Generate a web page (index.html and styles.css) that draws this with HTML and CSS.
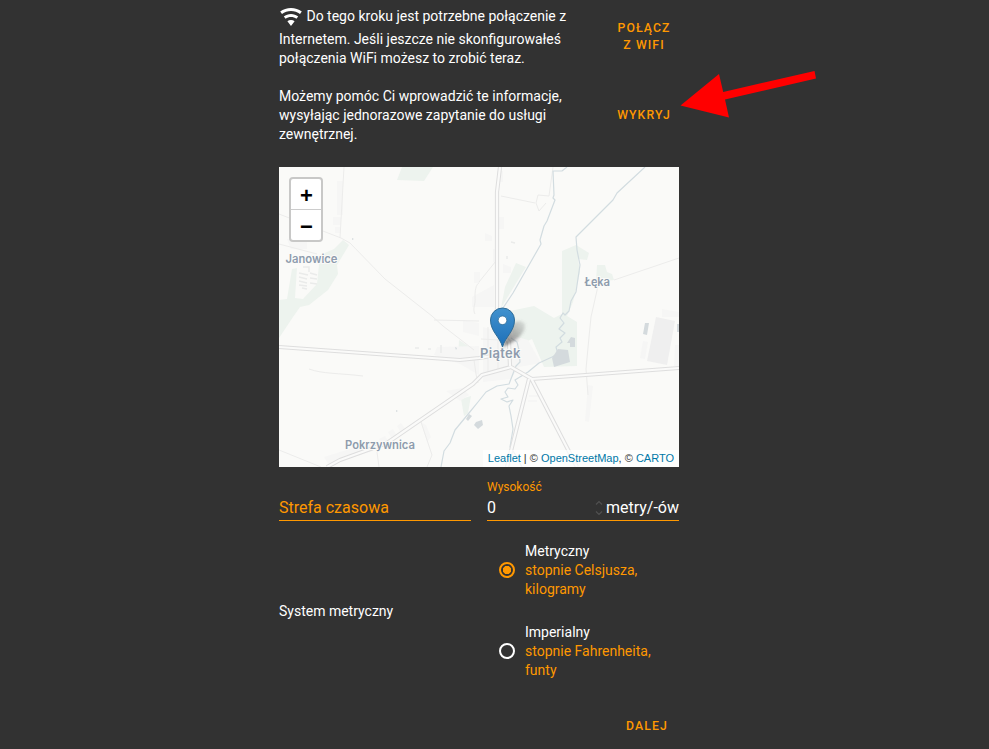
FILE: index.html
```html
<!DOCTYPE html>
<html lang="pl">
<head>
<meta charset="utf-8">
<title>Ustawienia regionalne</title>
<link rel="stylesheet" href="styles.css">
</head>
<body>
<main class="panel">
  <section class="row row-wifi">
    <p class="text"><svg class="wifi" viewBox="0 0 24 24"><path d="M12,21L15.6,16.2C14.6,15.45 13.35,15 12,15C10.65,15 9.4,15.45 8.4,16.2L12,21M12,3C7.95,3 4.21,4.34 1.2,6.6L3,9C5.5,7.12 8.62,6 12,6C15.38,6 18.5,7.12 21,9L22.8,6.6C19.79,4.34 16.05,3 12,3M12,9C9.3,9 6.81,9.89 4.8,11.4L6.6,13.8C8.1,12.67 9.97,12 12,12C14.03,12 15.9,12.67 17.4,13.8L19.2,11.4C17.19,9.89 14.7,9 12,9Z"/></svg> Do tego kroku jest potrzebne połączenie z<br>Internetem. Jeśli jeszcze nie skonfigurowałeś<br>połączenia WiFi możesz to zrobić teraz.</p>
    <button class="btn">Połącz<br>z WiFi</button>
  </section>
  <section class="row row-detect">
    <p class="text">Możemy pomóc Ci wprowadzić te informacje,<br>wysyłając jednorazowe zapytanie do usługi<br>zewnętrznej.</p>
    <button class="btn">Wykryj</button>
    <svg class="arrow" viewBox="0 0 140 50"><path d="M0.500 35.500L39 4L43.200 22L134.500 1L136 8.500L45 29.500L49 47.500Z"/></svg>
  </section>

  <section class="map">
    <svg class="tiles" viewBox="0 0 400 300">
      <defs>
        <linearGradient id="pin" x1="0" y1="0" x2="0" y2="1"><stop offset="0" stop-color="#4192ce"/><stop offset="1" stop-color="#1d6fb8"/></linearGradient>
        <linearGradient id="cast" gradientUnits="userSpaceOnUse" x1="224" y1="180" x2="246" y2="156"><stop offset="0" stop-color="#444" stop-opacity=".7"/><stop offset="1" stop-color="#555" stop-opacity=".15"/></linearGradient>
        <filter id="soft" x="-30%" y="-30%" width="160%" height="160%"><feGaussianBlur stdDeviation="1.800"/></filter>
      </defs>
      <g class="park">
        <path d="M123 0L118 13L145 14L154 0Z"/>
        <path d="M64 73L70 78L58 98L59 107L49 123L30 138L21 140L14 150L0 171V133L8 132L13 102L18 101L16 131L24 132L38 117L41 88L55 82Z"/>
        <path d="M237 96L247 100L222 141L226 120Z"/>
        <path d="M283 84L297 78L310 86L308 93L299 92L301 105L294 135L288 149L298 155L298 199L265 200L253 172L236 180L231 144L255 139L275 151L283 147Z"/>
        <path d="M318 98L326 98L328 105L333 107L335 113L317 115Z"/>
        <path d="M180 173L195 183V190L179 191ZM182 232L192 229L189 246L185 249Z"/>
      </g>
      <g class="built">
        <path d="M58 14H64V48H58ZM54 50H62V58H54ZM56 60H61V66H56ZM195 105H201V116H195ZM193 130L215 118V140H193ZM218 4H224V15H218ZM220 50H225V62H220ZM224 97L232 100V106H224ZM214 82H219V95H214ZM206 66L213 69V74H206ZM383 142L400 145V150H383Z"/>
        <path d="M8 72H28V82H12ZM45 290L90 276L94 284L50 298ZM167 224L183 221L190 228L181 234ZM158 180L200 179V208L181 197L155 188ZM184 153L200 156V169L184 165ZM204 160L249 173L262 196L240 200L232 212L204 215ZM309 218L314 219L310 255L306 254ZM250 228H260V230H250ZM249 233H258V235H249ZM100 272L106 269L109 274L103 277ZM109 265L114 262L118 269L113 272ZM118 259L122 256L127 263L122 266ZM142 255L147 258L152 270L148 275Z"/>
        <path d="M364 174L369 175L366 192L361 191ZM396 178H400V199H395Z"/>
      </g>
      <path class="hall" d="M377 150L396 154L388 198L368 194Z"/>
      <g class="houses"><path d="M24 100H30V105M20 106L29 108M20 110L28 112M20 114L28 116M20 118L28 119M31 106L38 108M31 111L38 112M31 116L38 117M23 121L28 122M136 181H140M149 182H152M162 178V186M232 75L236 76M228 89V92"/></g>
      <g class="minor">
        <path d="M65 0L61 71M0 47L62 71L71 76L106 112L153 149L164 159L195 183M0 77L38 87M200 115L217 94M196 147C193 142 197 137 196 130C196 120 198 117 200 116M222 29L256 36M274 0L270 29L259 28L257 36L260 44L267 36M335 113L400 91M319 119L312 150L310 170L307 202L309 228M155 153L200 154M30 202C44 207 59 206 84 209M0 283L42 300M98 285L100 300M142 255L153 288L148 300M195 193L197 207L199 216M202 172L240 174M202 184L230 183M204 191L229 190M209 160V208M219 160V204"/>
      </g>
      <g class="water">
        <path d="M288 0L283 4L274 4L275 28L274 31L276 33L268 54L265 59L261 73L262 77L234 126L224 141M232 171L238 175L240 183L241 195L237 199L230 217L218 219L207 225L199 235L190 246L176 263L171 276L165 284L162 300"/>
        <path d="M366 0L338 26L334 33L297 70L298 83L301 98L297 125L292 134L290 144L286 148L284 146L281 151L285 156L280 162L286 166L281 171L283 175L277 180L279 187L273 190L260 196L249 205L236 213L239 218L236 222L229 221L226 225L229 230L222 232L228 235L234 233L230 239L232 249L234 262L231 280L236 287L243 300"/>
      </g>
      <g class="pond"><path d="M279 182L289 183L291 195L275 200L273 191Z"/><path d="M366 156L370 156L368 168L364 167ZM398 157H400V165H398ZM292 170L296 171V180H291V176H288M190 247L193 249L189 254L187 252ZM197 255L203 253L204 258L199 262L195 258ZM73 71L75 72L73 73M176 180L178 181L177 183M117 243L119 244L117 245"/></g>
      <g class="road">
        <path class="outer" d="M221 0L218 25V162L230 175L231 199M0 180L181 193L200 191L219 188M48 300L61 293L108 276L194 217L203 208L232 200L253 212L400 201M250 212L228 300M252 211L298 300"/>
        <path class="inner" d="M221 0L218 25V162L230 175L231 199M0 180L181 193L200 191L219 188M48 300L61 293L108 276L194 217L203 208L232 200L253 212L400 201M250 212L228 300M252 211L298 300"/>
      </g>
      <g class="places">
        <text x="6.500" y="96" textLength="52">Janowice</text>
        <text x="305.500" y="118.500" textLength="25.500">Łęka</text>
        <text x="66" y="281.500" textLength="70">Pokrzywnica</text>
        <text class="town" x="201" y="190.500" textLength="40.500">Piątek</text>
      </g>
      <path class="shadow" d="M224 180L230 160Q240 150 246 157Q247 166 234 175Z"/>
      <path class="pin" d="M223.500 180C221 170 211.500 164.500 211.500 153A12 12 0 0 1 235.500 153C235.500 164.500 226 170 223.500 180Z"/>
      <circle class="pin-hole" cx="223.500" cy="153.300" r="4.300"/>
    </svg>
    <div class="zoom"><a class="zoom-key">+</a><a class="zoom-key">−</a></div>
    <div class="credit"><a>Leaflet</a> | © <a>OpenStreetMap</a>, © <a>CARTO</a></div>
  </section>

  <section class="fields">
    <div class="field"><span class="caption"></span><div class="line placeholder">Strefa czasowa</div></div>
    <div class="field"><span class="caption">Wysokość</span><div class="line"><span class="value">0</span><svg class="spin" viewBox="0 0 8 16"><path d="M1 4.500L4 1.500L7 4.500M1 11.500L4 14.500L7 11.500"/></svg><span>metry/-ów</span></div></div>
  </section>

  <section class="units">
    <div class="units-label">System metryczny</div>
    <div class="options">
      <label class="option"><span class="radio on"></span><span>Metryczny<br><em>stopnie Celsjusza,<br>kilogramy</em></span></label>
      <label class="option"><span class="radio"></span><span>Imperialny<br><em>stopnie Fahrenheita,<br>funty</em></span></label>
    </div>
  </section>
  <footer class="actions"><button class="btn">Dalej</button></footer>
</main>
</body>
</html>
```
FILE: styles.css
```css
* { box-sizing: border-box; }
body { margin: 0; height: 749px; overflow: hidden; background: #323232; color: #fff; font: 14px/19px Roboto, sans-serif; }
.panel { width: 400px; margin-left: 279px; padding-top: 5px; }
.row { display: flex; justify-content: space-between; align-items: center; position: relative; }
.row-wifi { height: 63px; }
.row-wifi .text { align-self: flex-end; }
.row-detect { height: 57px; margin-top: 19px; }
.text { margin: 0; white-space: nowrap; }
.wifi { width: 24px; height: 24px; margin-bottom: 1px; vertical-align: middle; fill: #fff; }
.btn { width: 70px; padding: 0; border: 0; background: none; color: #ff9800; font: 500 12.25px/17px Roboto, sans-serif; letter-spacing: 1.09px; text-transform: uppercase; text-align: center; }
.arrow { position: absolute; left: 401px; top: -17px; width: 140px; height: 50px; fill: #f00; }

.map { position: relative; height: 300px; margin-top: 23px; overflow: hidden; background: #fafaf8; }
.tiles { display: block; width: 400px; height: 300px; fill: none; }
.park { fill: #edf3ee; }
.built { fill: #f6f6f5; }
.hall { fill: #efefef; }
.houses { stroke: #eaebea; stroke-width: 1.5; }
.minor { stroke: #ececeb; stroke-width: 1; }
.water { stroke: #d2dce0; stroke-width: 1.2; stroke-linejoin: round; }
.pond { fill: #d4dadd; }
.road { stroke-linejoin: round; }
.outer { stroke: #dedede; stroke-width: 4.2; }
.inner { stroke: #fafaf9; stroke-width: 2.2; }
.places { fill: #8e9cad; stroke: #fafaf8; stroke-width: 2; paint-order: stroke; font: 600 11.3px Inter, sans-serif; }
.town { font-size: 13px; }
.shadow { fill: url(#cast); filter: url(#soft); }
.pin { fill: url(#pin); stroke: #2e6c97; stroke-width: 1; }
.pin-hole { fill: #fff; stroke: #2e6c97; stroke-width: .8; }
.zoom { position: absolute; left: 10px; top: 10px; width: 34px; border: 2px solid #c8c8c7; border-radius: 4px; background: #fff; overflow: hidden; }
.zoom-key { display: block; height: 30px; padding-left: 1px; color: #000; font: bold 22px/34px "Liberation Sans", sans-serif; text-align: center; }
.zoom-key:first-child { height: 31px; border-bottom: 1px solid #ccc; }
.credit { position: absolute; right: 0; bottom: 0; padding: 0 5px; background: rgba(255,255,255,.7); color: #333; font: 11px/17px "Liberation Sans", sans-serif; white-space: nowrap; }
.credit a { color: #0078a8; }

.fields { display: grid; grid-template-columns: 192px 192px; gap: 16px; margin-top: 12px; }
.caption { display: block; height: 16px; color: #ff9800; font-size: 12px; line-height: 16px; }
.line { display: flex; align-items: center; height: 26px; border-bottom: 1px solid #ff9800; font-size: 16px; line-height: 19px; }
.placeholder { color: #ff9800; }
.value { flex: 1; }
.spin { width: 8px; height: 16px; margin-right: 3px; fill: none; stroke: #505050; stroke-width: 1.2; }

.units { display: flex; align-items: center; height: 138px; margin-top: 21px; }
.units-label { width: 220px; }
.options { display: grid; gap: 24px; }
.option { display: flex; align-items: center; gap: 8px; white-space: nowrap; }
.option em { color: #ff9800; font-style: normal; }
.radio { width: 16px; height: 16px; margin: 0 2px 1px 0; border: 2px solid #fff; border-radius: 50%; }
.radio.on { border-color: #ff9800; background: radial-gradient(circle, #ff9800 3.8px, transparent 4.5px); }
.actions { display: flex; justify-content: flex-end; margin-top: 38px; }
.actions .btn { width: 64px; }
```
